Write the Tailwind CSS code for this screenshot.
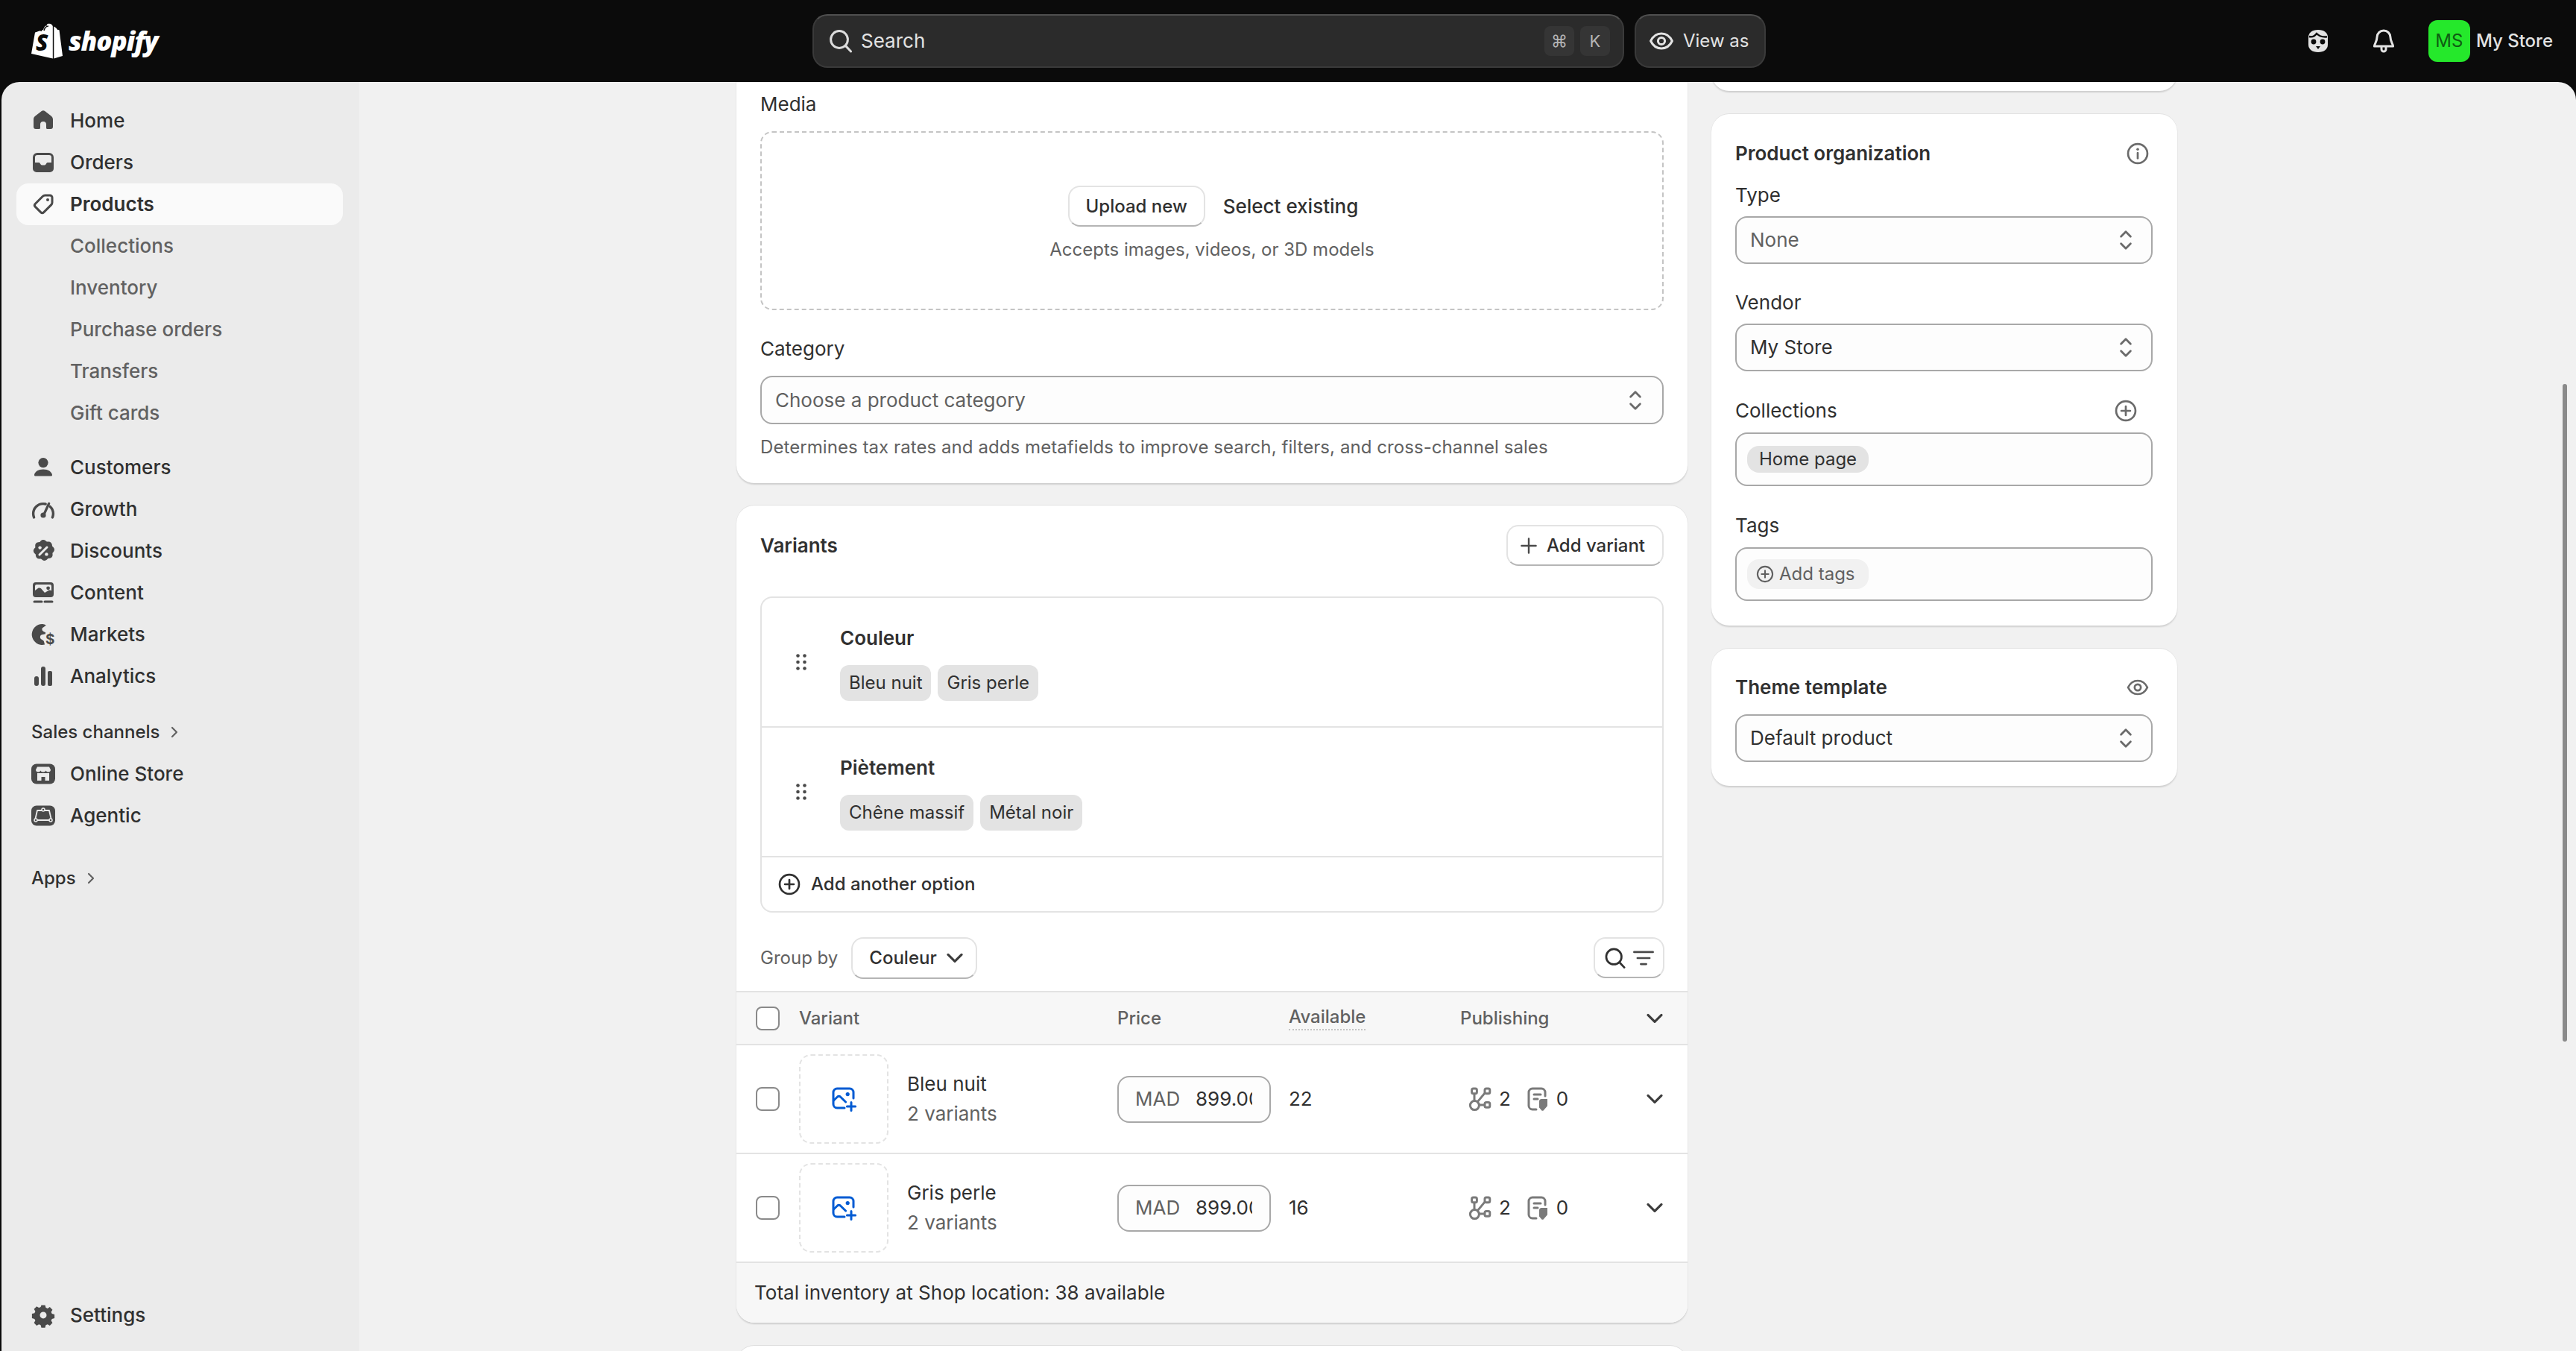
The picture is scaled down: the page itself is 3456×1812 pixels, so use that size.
<!DOCTYPE html>
<html lang="en">
<head>
<meta charset="utf-8">
<title>Shopify</title>
<script src="https://cdn.jsdelivr.net/npm/@tailwindcss/browser@4"></script>
</head>
<body class="bg-[#0b0b0b] font-[Inter,sans-serif] text-[26px] leading-[40px] text-[#303030] overflow-hidden">
<svg class="hidden" xmlns="http://www.w3.org/2000/svg">
  <symbol id="updown" viewBox="0 0 20 20"><path d="M6.8 7.6 10 4.4l3.2 3.2M6.8 12.4l3.2 3.2 3.200-3.200" fill="none" stroke="#6b6b6b" stroke-width="1.400" stroke-linecap="round" stroke-linejoin="round"/></symbol>
  <symbol id="down" viewBox="0 0 20 20"><path d="M5.500 7.700 10 12.200l4.500-4.500" fill="none" stroke="#3d3d3d" stroke-width="1.600" stroke-linecap="round" stroke-linejoin="round"/></symbol>
  <symbol id="pluscircle" viewBox="0 0 20 20"><circle cx="10" cy="10" r="7.200" fill="none" stroke="currentColor" stroke-width="1.500"/><path d="M10 6.700v6.600M6.700 10h6.600" stroke="currentColor" stroke-width="1.500" stroke-linecap="round"/></symbol>
  <symbol id="search" viewBox="0 0 20 20"><circle cx="9" cy="9" r="5.700" fill="none" stroke="currentColor" stroke-width="1.500"/><path d="m13.200 13.200 3.600 3.800" stroke="currentColor" stroke-width="1.500" stroke-linecap="round"/></symbol>
  <symbol id="eye" viewBox="0 0 20 20"><path d="M2.800 10C4.300 6.900 6.900 5 10 5s5.700 1.900 7.200 5c-1.500 3.100-4.100 5-7.200 5s-5.700-1.900-7.200-5Z" fill="none" stroke="currentColor" stroke-width="1.500" stroke-linejoin="round"/><circle cx="10" cy="10" r="2.300" fill="none" stroke="currentColor" stroke-width="1.500"/></symbol>
  <symbol id="imgadd" viewBox="0 0 20 20"><path d="M16.500 9.500V5.500a2.500 2.500 0 0 0-2.500-2.500H5.500A2.500 2.500 0 0 0 3 5.500v8A2.500 2.500 0 0 0 5.500 16h5" fill="none" stroke="#005bd3" stroke-width="1.500" stroke-linecap="round"/><path d="m3.200 11 2.600-2.500c.6-.5 1.300-.5 1.900 0l3.600 3.500" fill="none" stroke="#005bd3" stroke-width="1.500" stroke-linecap="round"/><circle cx="12.600" cy="6.800" r="1.300" fill="#005bd3"/><path d="M15 12.200v5.600M12.200 15h5.600" stroke="#005bd3" stroke-width="1.500" stroke-linecap="round"/></symbol>
  <symbol id="nodes" viewBox="0 0 20 20"><g fill="none" stroke="#7a7a7a" stroke-width="1.500"><circle cx="6.200" cy="14.300" r="3"/><rect x="4.300" y="3" width="3.400" height="3.400" rx="1"/><rect x="13" y="3" width="3.400" height="3.400" rx="1"/><rect x="13" y="12.200" width="3.400" height="3.400" rx="1"/><path d="M6 6.500v4.800M13.200 5.800l-5 6M9.200 14h3.800"/></g></symbol>
  <symbol id="tagdoc" viewBox="0 0 20 20"><path d="M9 17H6.500A2.500 2.500 0 0 1 4 14.500v-9A2.500 2.500 0 0 1 6.500 3h6A2.500 2.500 0 0 1 15 5.500V8" fill="none" stroke="#7a7a7a" stroke-width="1.500" stroke-linecap="round"/><path d="M7.500 7h4.500M7.500 10h2.500" stroke="#7a7a7a" stroke-width="1.500" stroke-linecap="round"/><path d="M11 11.500c0-.8.700-1.500 1.500-1.500h4v4.200c0 .4-.2.800-.5 1.100l-2.200 2.400c-.3.300-.8.300-1.100 0L11 15.800v-4.300Z" fill="#7a7a7a"/></symbol>
  <symbol id="dots" viewBox="0 0 20 20"><g fill="#4a4a4a"><circle cx="7.750" cy="5.750" r="1.150"/><circle cx="12.250" cy="5.750" r="1.150"/><circle cx="7.750" cy="10" r="1.150"/><circle cx="12.250" cy="10" r="1.150"/><circle cx="7.750" cy="14.250" r="1.150"/><circle cx="12.250" cy="14.250" r="1.150"/></g></symbol>
</svg>

<div class="flex flex-col h-[1812px] w-[3456px]">
  <header class="h-[110px] shrink-0 flex items-center text-[#e3e3e3]">
    <div class="w-[1090px] shrink-0 flex items-center pl-[42px] gap-[8px]">
      <svg width="42" height="48" viewBox="0 0 42 48">
        <path d="M0 41 5 12.500c3-1 7-2.300 11-3.500C18 3 21 .8 24 .8c3 0 4.300 2 4.800 3.500V47.500Z" fill="#fff"/>
        <path d="M30.300 4.500 33 6.300l2.300 2.700 2.200.2L42 44l-11.700 3.500Z" fill="#fff"/>
        <path d="M13 11C14 5 18 2.500 21 2.500M17 10c1-4 3.500-6 6-6" fill="none" stroke="#0b0b0b" stroke-width="1.500"/>
        <text x="6" y="37" font-family="Open Sans" font-weight="800" font-style="italic" font-size="30" fill="#0b0b0b">S</text>
      </svg>
      <span class="font-['Open_Sans',sans-serif] font-extrabold italic text-[35px] leading-[48px] text-white tracking-[-1px]">shopify</span>
    </div>
    <div class="w-[1089px] h-[72px] shrink-0 flex items-center bg-[#2b2b2b] rounded-[20px] border-2 border-[#3a3a3a] border-t-[#4f4f4f] pl-[16px] pr-[17px]">
      <svg class="w-[40px] h-[40px]" style="color:#dcdcdc"><use href="#search"/></svg>
      <span class="ml-[7px]">Search</span>
      <span class="ml-auto w-[40px] h-[40px] rounded-[8px] bg-[#353535] flex items-center justify-center text-[22px] text-[#b5b5b5]">⌘</span>
      <span class="ml-[8px] w-[40px] h-[40px] rounded-[8px] bg-[#353535] flex items-center justify-center text-[22px] text-[#b5b5b5]">K</span>
    </div>
    <div class="ml-[14px] w-[176px] h-[72px] shrink-0 flex items-center bg-[#2b2b2b] rounded-[20px] border-2 border-[#3a3a3a] border-t-[#4f4f4f] pl-[14px] text-[24px]">
      <svg class="w-[40px] h-[40px]"><use href="#eye"/></svg>
      <span class="ml-[9px] whitespace-nowrap">View as</span>
    </div>
    <div class="ml-auto flex items-center pr-[31px]">
      <svg class="w-[40px] h-[40px]" viewBox="0 0 20 20"><path d="M3.500 7.500C3.500 4.500 6 2.500 10 2.500s6.500 2 6.500 5v5c0 3-2.500 5-6.500 5s-6.500-2-6.500-5v-5Z" fill="#e3e3e3"/><path d="M4 7c2 .6 3.500 0 5-2 1.500 1.500 4 2.500 7 2.200" fill="none" stroke="#0b0b0b" stroke-width="1.200"/><circle cx="7" cy="10.500" r="1.700" fill="#0b0b0b"/><circle cx="13" cy="10.500" r="1.700" fill="#0b0b0b"/><path d="M8.500 13.500h3l-1.500 2Z" fill="#0b0b0b"/></svg>
      <svg class="ml-[48px] w-[40px] h-[40px]" viewBox="0 0 20 20"><path d="M10 3a4.500 4.500 0 0 0-4.500 4.500c0 3-1.800 4.500-1.800 6h12.600c0-1.500-1.800-3-1.800-6A4.500 4.500 0 0 0 10 3Z" fill="none" stroke="#e3e3e3" stroke-width="1.500" stroke-linejoin="round"/><path d="M8.500 13.800v1.700a1.500 1.500 0 0 0 3 0v-1.700" fill="none" stroke="#e3e3e3" stroke-width="1.500"/></svg>
      <div class="ml-[40px] w-[56px] h-[56px] rounded-[12px] bg-[#25e82b] text-[#0f5c12] flex items-center justify-center text-[24px]">MS</div>
      <span class="ml-[8px] font-medium whitespace-nowrap text-[24px]">My Store</span>
    </div>
  </header>

  <div class="flex-1 flex min-h-0 pl-[2px]">
    <nav class="w-[480px] shrink-0 bg-[#ebebeb] rounded-tl-[24px] pt-[24px] pb-[20px] pl-[20px] pr-[22px] flex flex-col font-medium">
      <a class="h-[56px] flex items-center gap-[17px] pl-[16px]">
        <svg class="w-[40px] h-[40px] shrink-0" viewBox="0 0 20 20"><path d="M8.900 3.500a1.800 1.800 0 0 1 2.200 0l4.200 3.300c.7.500 1.200 1.400 1.200 2.300v4.900a1.500 1.500 0 0 1-1.500 1.500h-2.200a.8.800 0 0 1-.8-.8V12.500a2 2 0 0 0-4 0v2.200a.8.800 0 0 1-.8.800H5a1.500 1.500 0 0 1-1.500-1.500V9.100c0-.9.400-1.800 1.200-2.300Z" fill="#4a4a4a"/></svg><span class="-ml-[1px]">Home</span></a>
      <a class="h-[56px] flex items-center gap-[17px] pl-[16px]">
        <svg class="w-[40px] h-[40px] shrink-0" viewBox="0 0 20 20"><path fill-rule="evenodd" d="M6 3.500h8A3 3 0 0 1 17 6.500v7.500a2.500 2.500 0 0 1-2.500 2.500h-9A2.500 2.500 0 0 1 3 14V6.500a3 3 0 0 1 3-3Zm-1.500 6.500h2.300c.5 0 .9.200 1.100.6l.4.700c.2.300.5.500.9.500h1.600c.4 0 .7-.2.900-.5l.4-.7c.2-.4.600-.6 1.100-.6h2.300V6.500A1.500 1.500 0 0 0 14 5H6a1.500 1.500 0 0 0-1.500 1.500Z" fill="#4a4a4a"/></svg><span class="-ml-[1px]">Orders</span></a>
      <a class="h-[56px] flex items-center gap-[17px] pl-[16px] bg-[#fafafa] rounded-[16px] font-semibold">
        <svg class="w-[40px] h-[40px] shrink-0" viewBox="0 0 20 20"><path d="M11.200 4h3.300c.8 0 1.500.7 1.500 1.500v3.300c0 .6-.2 1.100-.6 1.500l-5 5c-.6.600-1.500.6-2.100 0l-3.600-3.600c-.6-.6-.6-1.500 0-2.100l5-5c.4-.4.900-.6 1.500-.6Z" fill="none" stroke="#4a4a4a" stroke-width="1.500"/><circle cx="13" cy="7" r="1" fill="#4a4a4a"/></svg><span class="-ml-[1px]">Products</span></a>
      <a class="h-[56px] flex items-center pl-[72px] text-[#616161]">Collections</a>
      <a class="h-[56px] flex items-center pl-[72px] text-[#616161]">Inventory</a>
      <a class="h-[56px] flex items-center pl-[72px] text-[#616161]">Purchase orders</a>
      <a class="h-[56px] flex items-center pl-[72px] text-[#616161]">Transfers</a>
      <a class="h-[56px] flex items-center pl-[72px] text-[#616161]">Gift cards</a>
      <a class="mt-[17px] h-[56px] flex items-center gap-[17px] pl-[16px]">
        <svg class="w-[40px] h-[40px] shrink-0" viewBox="0 0 20 20"><circle cx="10" cy="6.800" r="3.300" fill="#4a4a4a"/><path d="M10 11.200c-3.400 0-5.600 1.600-6 3.700-.1.500.3.900.8.900h10.400c.5 0 .9-.4.800-.9-.4-2.100-2.600-3.700-6-3.700Z" fill="#4a4a4a"/></svg><span class="-ml-[1px]">Customers</span></a>
      <a class="h-[56px] flex items-center gap-[17px] pl-[16px]">
        <svg class="w-[40px] h-[40px] shrink-0" viewBox="0 0 20 20"><path d="M3.800 15.500c-.3-.9-.5-1.700-.5-2.500 0-3.700 3-6.700 6.700-6.700.6 0 1.100.1 1.600.2M14.600 8.200c1.300 1.200 2.100 2.900 2.100 4.800 0 .9-.2 1.700-.5 2.500" fill="none" stroke="#4a4a4a" stroke-width="1.700" stroke-linecap="round"/><path d="M13.800 6.200 10.800 12.800" stroke="#4a4a4a" stroke-width="1.700" stroke-linecap="round"/><circle cx="10" cy="14" r="1.800" fill="#4a4a4a"/></svg><span class="-ml-[1px]">Growth</span></a>
      <a class="h-[56px] flex items-center gap-[17px] pl-[16px]">
        <svg class="w-[40px] h-[40px] shrink-0" viewBox="0 0 20 20"><path d="M8.400 3.100c.9-.8 2.300-.8 3.200 0l.8.700 1.100-.1c1.200-.1 2.200.8 2.400 2l.1 1.100.8.700c.9.900.9 2.200.1 3.100l-.7.800.1 1.100c.1 1.200-.8 2.300-2 2.400l-1.100.1-.7.800c-.9.900-2.300.9-3.200.1l-.8-.7-1.100.1c-1.200.1-2.300-.8-2.400-2l-.1-1.100-.8-.7c-.9-.9-.9-2.200-.1-3.100l.7-.8-.1-1.100c-.1-1.200.8-2.300 2-2.400l1.100-.1Z" fill="#4a4a4a"/><path d="M12.500 7.500 7.500 12.500" stroke="#ebebeb" stroke-width="1.500" stroke-linecap="round"/><circle cx="7.800" cy="7.800" r="1.100" fill="#ebebeb"/><circle cx="12.200" cy="12.200" r="1.100" fill="#ebebeb"/></svg><span class="-ml-[1px]">Discounts</span></a>
      <a class="h-[56px] flex items-center gap-[17px] pl-[16px]">
        <svg class="w-[40px] h-[40px] shrink-0" viewBox="0 0 20 20"><path fill-rule="evenodd" d="M5 3h10a2 2 0 0 1 2 2v6a2 2 0 0 1-2 2H5a2 2 0 0 1-2-2V5a2 2 0 0 1 2-2Zm-.5 2.500v3l2-1.500c.6-.4 1.400-.3 2 .1L11 10l2.500-1.500c.6-.3 1.300-.3 2 .1V5.500a1 1 0 0 0-1-1h-9a1 1 0 0 0-1 1Zm8.800.2a1.200 1.200 0 1 0 0 2.400 1.200 1.200 0 0 0 0-2.400Z" fill="#4a4a4a"/><path d="M4 16h5M11 16h5" stroke="#4a4a4a" stroke-width="1.500" stroke-linecap="round"/></svg><span class="-ml-[1px]">Content</span></a>
      <a class="h-[56px] flex items-center gap-[17px] pl-[16px]">
        <svg class="w-[40px] h-[40px] shrink-0" viewBox="0 0 20 20"><path d="M9.500 3a7 7 0 1 0 1.500 13.800l-.5-2c-.5-1.500-2-1-2.500-2.500-.3-1 .2-2 1.200-2.200l2.300-.5V8.500c-1.300-.2-2.300-1-2.300-2 0-1 1.200-1.300 2.700-2.700A7 7 0 0 0 9.500 3Z" fill="#4a4a4a"/><text x="11.500" y="16.500" font-size="9.500" font-weight="700" fill="#4a4a4a" font-family="Inter">$</text></svg><span class="-ml-[1px]">Markets</span></a>
      <a class="h-[56px] flex items-center gap-[17px] pl-[16px]">
        <svg class="w-[40px] h-[40px] shrink-0" viewBox="0 0 20 20"><rect x="4" y="10" width="3" height="6.500" rx="1.500" fill="#4a4a4a"/><rect x="8.500" y="3.500" width="3" height="13" rx="1.500" fill="#4a4a4a"/><rect x="13" y="6.500" width="3" height="10" rx="1" fill="#4a4a4a"/></svg><span class="-ml-[1px]">Analytics</span></a>
      <div class="mt-[19px] h-[56px] flex items-center pl-[20px] text-[24px]">Sales channels
        <svg class="ml-[8px] w-[24px] h-[24px]" viewBox="0 0 20 20"><path d="m7.500 5 5 5-5 5" fill="none" stroke="#616161" stroke-width="1.800" stroke-linecap="round" stroke-linejoin="round"/></svg></div>
      <a class="h-[56px] flex items-center gap-[21px] pl-[20px]">
        <svg class="w-[32px] h-[32px] shrink-0" viewBox="0 0 32 32"><rect width="32" height="27" rx="7" y="2.500" fill="#4a4a4a"/><path d="M6 10.500 8 6.500h16l2 4c0 1.800-1.500 3-3.300 3s-2.500-1-3-2c-.5 1-2 2-3.700 2s-3.200-1-3.700-2c-.5 1-1.200 2-3 2S6 12.300 6 10.500ZM8 15v10h5.500v-5h5v5H24V15Z" fill="#ebebeb"/></svg><span class="-ml-[1px]">Online Store</span></a>
      <a class="h-[56px] flex items-center gap-[21px] pl-[20px]">
        <svg class="w-[32px] h-[32px] shrink-0" viewBox="0 0 32 32"><rect width="32" height="27" rx="7" y="2.500" fill="#4a4a4a"/><path d="M8 9h16l3 13H5Z" fill="none" stroke="#ebebeb" stroke-width="1.800" stroke-linejoin="round"/><circle cx="16" cy="8" r="2" fill="#4a4a4a" stroke="#ebebeb" stroke-width="1.500"/><circle cx="6" cy="22" r="2" fill="#4a4a4a" stroke="#ebebeb" stroke-width="1.500"/><circle cx="26" cy="22" r="2" fill="#4a4a4a" stroke="#ebebeb" stroke-width="1.500"/></svg><span class="-ml-[1px]">Agentic</span></a>
      <div class="mt-[28px] h-[56px] flex items-center pl-[20px] text-[24px]">Apps
        <svg class="ml-[8px] w-[24px] h-[24px]" viewBox="0 0 20 20"><path d="m7.500 5 5 5-5 5" fill="none" stroke="#616161" stroke-width="1.800" stroke-linecap="round" stroke-linejoin="round"/></svg></div>
      <a class="mt-auto h-[56px] flex items-center gap-[17px] pl-[16px]">
        <svg class="w-[40px] h-[40px] shrink-0" viewBox="0 0 20 20"><path fill-rule="evenodd" d="M8.600 3h2.800l.5 1.900 1.300.6 1.700-1 2 2-1 1.700.6 1.300 1.900.5v2.800l-1.900.5-.6 1.300 1 1.700-2 2-1.700-1-1.300.6-.5 1.900H8.600l-.5-1.900-1.300-.6-1.700 1-2-2 1-1.700-.6-1.300-1.900-.5V9.500l1.900-.5.6-1.300-1-1.700 2-2 1.700 1 1.300-.6ZM10 8a2.500 2.500 0 1 0 0 5 2.500 2.500 0 0 0 0-5Z" transform="translate(1 .5) scale(.9)" fill="#4a4a4a"/></svg><span class="-ml-[1px]">Settings</span></a>
    </nav>

    <main class="relative flex-1 bg-[#f1f1f1] rounded-tr-[24px] overflow-hidden flex items-start gap-[32px] pl-[506px]">
      <div class="w-[1276px] shrink-0 -mt-[40px]">
        <section class="bg-white rounded-[24px] shadow-[0_2px_2px_rgba(0,0,0,0.14),0_-1px_0_rgba(0,0,0,0.06)] px-[32px] pt-[50px] pb-[28px]">
          <div>Media</div>
          <div class="mt-[16px] h-[240px] rounded-[16px] border-2 border-dashed border-[#c4c4c4] flex flex-col items-center justify-center bg-white">
            <div class="flex items-center mt-[12px] pl-[3px]">
              <button class="h-[55px] w-[184px] rounded-[16px] bg-white border-2 border-[#e3e3e3] border-b-[#b5b5b5] font-medium text-[24px]">Upload new</button>
              <span class="ml-[24px] font-medium">Select existing</span>
            </div>
            <div class="mt-[11px] text-[#616161] text-[24px]">Accepts images, videos, or 3D models</div>
          </div>
          <div class="mt-[32px]">Category</div>
          <div class="mt-[16px] h-[65px] rounded-[16px] border-2 border-[#a8a8a8] bg-[#fdfdfd] flex items-center px-[18px] text-[#616161]">Choose a product category
            <svg class="ml-auto w-[40px] h-[40px] -mr-[2px]"><use href="#updown"/></svg></div>
          <div class="mt-[11px] text-[#616161] text-[24px] tracking-[0.07px]">Determines tax rates and adds metafields to improve search, filters, and cross-channel sales</div>
        </section>

        <section class="mt-[30px] bg-white rounded-[24px] shadow-[0_2px_2px_rgba(0,0,0,0.14),0_-1px_0_rgba(0,0,0,0.06)] pt-[26px]">
          <div class="flex items-center justify-between px-[32px] h-[55px]">
            <h2 class="font-semibold">Variants</h2>
            <button class="h-[55px] w-[211px] rounded-[16px] bg-white border-2 border-[#e3e3e3] border-b-[#b5b5b5] font-medium text-[24px] flex items-center pl-[12px] gap-[8px]">
              <svg class="w-[32px] h-[32px]" viewBox="0 0 20 20"><path d="M10 4v12M4 10h12" stroke="#4a4a4a" stroke-width="1.500" stroke-linecap="round"/></svg>Add variant</button>
          </div>
          <div class="mt-[41px] mx-[32px] rounded-[16px] border-2 border-[#e3e3e3]">
            <div class="h-[174px] flex items-center border-b-2 border-[#e3e3e3]">
              <div class="w-[105px] shrink-0 flex justify-center"><svg class="w-[40px] h-[40px]"><use href="#dots"/></svg></div>
              <div>
                <div class="font-semibold">Couleur</div>
                <div class="mt-[16px] flex gap-[9px]">
                  <span class="h-[48px] px-[12px] rounded-[12px] bg-[#e3e3e3] flex items-center text-[24px] whitespace-nowrap">Bleu nuit</span>
                  <span class="h-[48px] px-[12px] rounded-[12px] bg-[#e3e3e3] flex items-center text-[24px] whitespace-nowrap">Gris perle</span>
                </div>
              </div>
            </div>
            <div class="h-[174px] flex items-center border-b-2 border-[#e3e3e3]">
              <div class="w-[105px] shrink-0 flex justify-center"><svg class="w-[40px] h-[40px]"><use href="#dots"/></svg></div>
              <div>
                <div class="font-semibold">Piètement</div>
                <div class="mt-[16px] flex gap-[9px]">
                  <span class="h-[48px] px-[12px] rounded-[12px] bg-[#e3e3e3] flex items-center text-[24px] whitespace-nowrap">Chêne massif</span>
                  <span class="h-[48px] px-[12px] rounded-[12px] bg-[#e3e3e3] flex items-center text-[24px] whitespace-nowrap">Métal noir</span>
                </div>
              </div>
            </div>
            <div class="h-[72px] flex items-center pl-[19px] font-medium text-[24px]">
              <svg class="w-[36px] h-[36px] text-[#303030]"><use href="#pluscircle"/></svg>
              <span class="ml-[11px]">Add another option</span>
            </div>
          </div>
          <div class="mt-[33px] mx-[32px] flex items-center h-[55px] text-[24px]">
            <span class="text-[#616161]">Group by</span>
            <button class="ml-[18px] h-[56px] w-[169px] rounded-[16px] bg-white border-2 border-[#e3e3e3] border-b-[#b5b5b5] font-medium flex items-center pl-[22px] gap-[4px]">Couleur<svg class="w-[40px] h-[40px]"><use href="#down"/></svg></button>
            <button class="ml-auto -mr-[1px] h-[55px] w-[95px] rounded-[16px] bg-white border-2 border-[#e3e3e3] border-b-[#b5b5b5] flex items-center justify-center gap-[2px] text-[#303030]">
              <svg class="w-[36px] h-[36px]"><use href="#search"/></svg>
              <svg class="w-[36px] h-[36px]" viewBox="0 0 20 20"><path d="M3 5.500h14M5.500 10h9M8 14.500h4" stroke="#4a4a4a" stroke-width="1.500" stroke-linecap="round"/></svg>
            </button>
          </div>
          <div class="mt-[17px] h-[73px] flex items-center bg-[#f7f7f7] border-y-2 border-[#e3e3e3] font-medium text-[#616161] text-[24px]">
            <div class="w-[84px] shrink-0 pl-[26px]"><div class="w-[32px] h-[32px] rounded-[8px] border-2 border-[#8a8a8a] bg-white"></div></div>
            <div class="w-[427px] shrink-0">Variant</div>
            <div class="w-[230px] shrink-0">Price</div>
            <div class="w-[230px] shrink-0 -mt-[4px]"><span class="border-b-2 border-dotted border-[#c4c4c4] leading-[32px] inline-block">Available</span></div>
            <div class="flex-1">Publishing</div>
            <svg class="w-[40px] h-[40px] mr-[24px]"><use href="#down"/></svg>
          </div>
          <div class="h-[146px] flex items-center border-b-2 border-[#e3e3e3]">
            <div class="w-[84px] shrink-0 pl-[26px]"><div class="w-[32px] h-[32px] rounded-[8px] border-2 border-[#8a8a8a] bg-white"></div></div>
            <div class="w-[427px] shrink-0 flex items-center">
              <div class="w-[120px] h-[120px] rounded-[16px] border-2 border-dashed border-[#e3e3e3] flex items-center justify-center"><svg class="w-[40px] h-[40px]"><use href="#imgadd"/></svg></div>
              <div class="ml-[25px]"><div>Bleu nuit</div><div class="text-[#616161]">2 variants</div></div>
            </div>
            <div class="w-[230px] shrink-0"><div class="w-[206px] h-[63px] rounded-[16px] border-2 border-[#a8a8a8] bg-[#fdfdfd] flex items-center pl-[22px]"><span class="w-[81px] shrink-0 text-[#616161]">MAD</span><span class="w-[76px] overflow-hidden whitespace-nowrap">899.00</span></div></div>
            <div class="w-[230px] shrink-0">22</div>
            <div class="flex-1 flex items-center pl-[7px]">
              <svg class="w-[40px] h-[40px]"><use href="#nodes"/></svg><span class="ml-[5px]">2</span>
              <svg class="ml-[16px] w-[40px] h-[40px]"><use href="#tagdoc"/></svg><span class="ml-[5px]">0</span>
            </div>
            <svg class="w-[40px] h-[40px] mr-[24px]"><use href="#down"/></svg>
          </div>
          <div class="h-[146px] flex items-center border-b-2 border-[#e3e3e3]">
            <div class="w-[84px] shrink-0 pl-[26px]"><div class="w-[32px] h-[32px] rounded-[8px] border-2 border-[#8a8a8a] bg-white"></div></div>
            <div class="w-[427px] shrink-0 flex items-center">
              <div class="w-[120px] h-[120px] rounded-[16px] border-2 border-dashed border-[#e3e3e3] flex items-center justify-center"><svg class="w-[40px] h-[40px]"><use href="#imgadd"/></svg></div>
              <div class="ml-[25px]"><div>Gris perle</div><div class="text-[#616161]">2 variants</div></div>
            </div>
            <div class="w-[230px] shrink-0"><div class="w-[206px] h-[63px] rounded-[16px] border-2 border-[#a8a8a8] bg-[#fdfdfd] flex items-center pl-[22px]"><span class="w-[81px] shrink-0 text-[#616161]">MAD</span><span class="w-[76px] overflow-hidden whitespace-nowrap">899.00</span></div></div>
            <div class="w-[230px] shrink-0">16</div>
            <div class="flex-1 flex items-center pl-[7px]">
              <svg class="w-[40px] h-[40px]"><use href="#nodes"/></svg><span class="ml-[5px]">2</span>
              <svg class="ml-[16px] w-[40px] h-[40px]"><use href="#tagdoc"/></svg><span class="ml-[5px]">0</span>
            </div>
            <svg class="w-[40px] h-[40px] mr-[24px]"><use href="#down"/></svg>
          </div>
          <div class="h-[80px] flex items-center bg-[#f7f7f7] rounded-b-[24px] pl-[24px] tracking-[0.03px]">Total inventory at Shop location: 38 available</div>
        </section>
        <section class="mt-[31px] h-[80px] bg-white rounded-t-[24px] shadow-[0_-1px_0_rgba(0,0,0,0.08)]"></section>
      </div>

      <div class="w-[625px] shrink-0 -mt-[48px]">
        <section class="h-[60px] bg-white rounded-[24px] shadow-[0_2px_2px_rgba(0,0,0,0.14)]"></section>
        <section class="mt-[31px] bg-white rounded-[24px] shadow-[0_2px_2px_rgba(0,0,0,0.14),0_-1px_0_rgba(0,0,0,0.06)] pl-[32px] pr-[33px] pt-[33px] pb-[33px]">
          <div class="flex items-center justify-between">
            <h2 class="font-semibold">Product organization</h2>
            <svg class="w-[36px] h-[36px] mr-[2px] text-[#6b6b6b]" viewBox="0 0 20 20"><circle cx="10" cy="10" r="7.200" fill="none" stroke="currentColor" stroke-width="1.500"/><path d="M10 9.500v4" stroke="currentColor" stroke-width="1.500" stroke-linecap="round"/><circle cx="10" cy="6.800" r="1" fill="currentColor"/></svg>
          </div>
          <div class="mt-[16px]">Type</div>
          <div class="mt-[8px] h-[64px] rounded-[16px] border-2 border-[#a8a8a8] bg-[#fdfdfd] flex items-center pl-[18px] pr-[14px] text-[#616161]">None<svg class="ml-auto w-[40px] h-[40px]"><use href="#updown"/></svg></div>
          <div class="mt-[32px]">Vendor</div>
          <div class="mt-[8px] h-[64px] rounded-[16px] border-2 border-[#a8a8a8] bg-[#fdfdfd] flex items-center pl-[18px] pr-[14px]">My Store<svg class="ml-auto w-[40px] h-[40px]"><use href="#updown"/></svg></div>
          <div class="mt-[33px] flex items-center justify-between pr-[18px]">Collections<svg class="w-[36px] h-[36px] text-[#6b6b6b]"><use href="#pluscircle"/></svg></div>
          <div class="mt-[9px] h-[72px] rounded-[16px] border-2 border-[#a8a8a8] bg-[#fdfdfd] flex items-center pl-[14px]">
            <span class="h-[36px] w-[163px] rounded-[16px] bg-[#e3e3e3] flex items-center pl-[16px] text-[24px]">Home page</span>
          </div>
          <div class="mt-[33px]">Tags</div>
          <div class="mt-[9px] h-[72px] rounded-[16px] border-2 border-[#a8a8a8] bg-[#fdfdfd] flex items-center pl-[14px]">
            <span class="h-[40px] w-[163px] rounded-[16px] bg-[#f1f1f1] flex items-center pl-[10px] text-[24px] text-[#616161]"><svg class="w-[28px] h-[28px] text-[#616161]"><use href="#pluscircle"/></svg><span class="ml-[5px]">Add tags</span></span>
          </div>
        </section>
        <section class="mt-[31px] bg-white rounded-[24px] shadow-[0_2px_2px_rgba(0,0,0,0.14),0_-1px_0_rgba(0,0,0,0.06)] pl-[32px] pr-[33px] pt-[32px] pb-[32px]">
          <div class="flex items-center justify-between">
            <h2 class="font-semibold">Theme template</h2>
            <svg class="w-[36px] h-[36px] mr-[2px] text-[#6b6b6b]"><use href="#eye"/></svg>
          </div>
          <div class="mt-[16px] h-[64px] rounded-[16px] border-2 border-[#a8a8a8] bg-[#fdfdfd] flex items-center pl-[18px] pr-[14px]">Default product<svg class="ml-auto w-[40px] h-[40px]"><use href="#updown"/></svg></div>
        </section>
      </div>

      <div class="absolute right-[12px] top-[405px] w-[6px] h-[882px] rounded-full bg-[#8a8a8a]"></div>
    </main>
  </div>
</div>
</body>
</html>
